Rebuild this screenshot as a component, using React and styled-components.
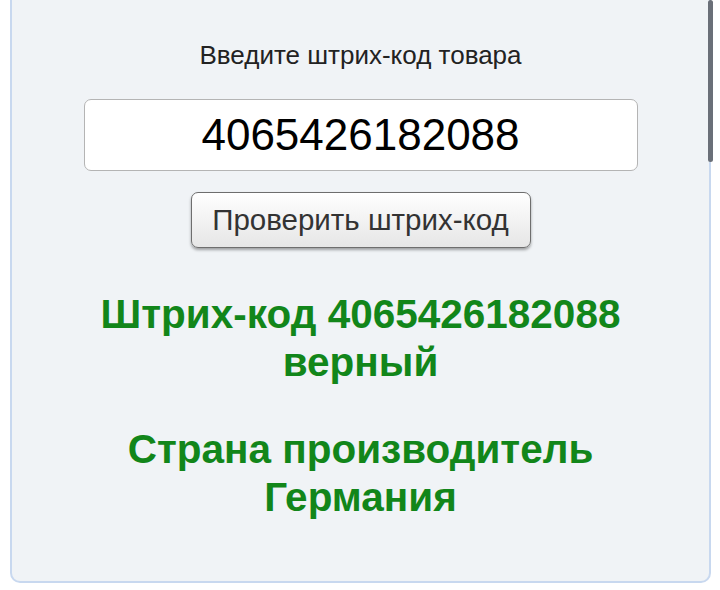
import React from 'react';
import styled, { createGlobalStyle } from 'styled-components';

const GlobalStyle = createGlobalStyle`
  html, body {
    margin: 0;
    padding: 0;
    background: #ffffff;
    font-family: "Liberation Sans", Arial, sans-serif;
  }
`;

const Page = styled.div`
  position: relative;
  height: 590px;
  overflow: hidden;
`;

const Panel = styled.div`
  margin: 0 9px 0 10px;
  height: 583px;
  box-sizing: border-box;
  background: #f0f3f6;
  border: 2px solid #c8d8ef;
  border-top: none;
  border-radius: 0 0 10px 10px;
  display: flex;
  flex-direction: column;
  align-items: center;
  padding-top: 40px;
`;

const Label = styled.div`
  font-size: 26px;
  color: #222;
`;

const CodeInput = styled.input`
  margin-top: 28px;
  width: 554px;
  height: 72px;
  box-sizing: border-box;
  border: 1.5px solid #b4b4b4;
  border-radius: 7px;
  background: #fff;
  text-align: center;
  font-family: "Liberation Sans", Arial, sans-serif;
  font-size: 44px;
  color: #000;
  outline: none;
`;

const CheckButton = styled.button`
  margin-top: 21px;
  width: 340px;
  height: 56px;
  box-sizing: border-box;
  border: 1.5px solid #6e6e6e;
  border-radius: 7px;
  background: linear-gradient(#ffffff, #e6e6e6);
  box-shadow: 0 2px 3px rgba(0, 0, 0, 0.35);
  font-family: "Liberation Sans", Arial, sans-serif;
  font-size: 29.5px;
  color: #333;
`;

const Result = styled.div`
  margin-top: ${p => p.$gap}px;
  font-size: 40.5px;
  font-weight: bold;
  line-height: 48px;
  color: #12861a;
  text-align: center;
`;

const Scrollbar = styled.div`
  position: absolute;
  right: 7px;
  top: 0;
  width: 5px;
  height: 162px;
  border-radius: 3px;
  background: #6a6f78;
`;

export default function App() {
  const code = '4065426182088';
  return (
    <Page>
      <GlobalStyle />
      <Panel>
        <Label>Введите штрих-код товара</Label>
        <CodeInput defaultValue={code} />
        <CheckButton>Проверить штрих-код</CheckButton>
        <Result $gap={42}>Штрих-код {code}<br />верный</Result>
        <Result $gap={39}>Страна производитель<br />Германия</Result>
      </Panel>
      <Scrollbar />
    </Page>
  );
}
